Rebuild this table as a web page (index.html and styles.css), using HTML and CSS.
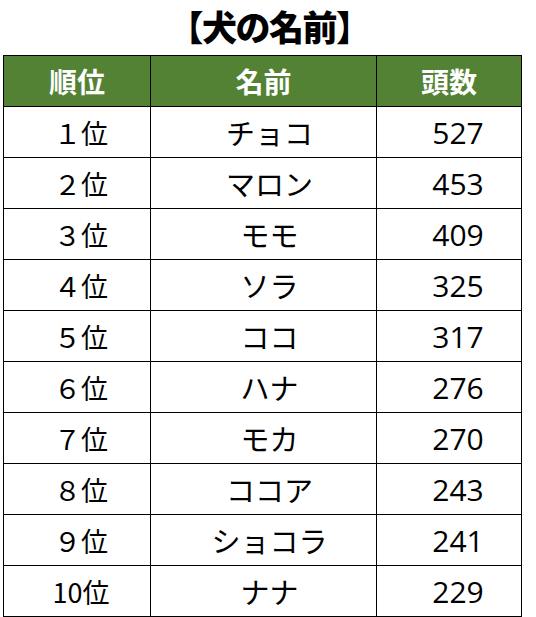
FILE: index.html
```html
<!DOCTYPE html>
<html lang="ja">
<head>
<meta charset="utf-8">
<link rel="stylesheet" href="styles.css">
</head>
<body>
<div class="page">
  <h1 class="title">【犬の名前】</h1>
  <table class="rank">
    <colgroup>
      <col class="c1"><col class="c2"><col class="c3">
    </colgroup>
    <thead>
      <tr><th>順位</th><th>名前</th><th>頭数</th></tr>
    </thead>
    <tbody>
      <tr><td>１位</td><td class="name">チョコ</td><td class="num">527</td></tr>
      <tr><td>２位</td><td class="name">マロン</td><td class="num">453</td></tr>
      <tr><td>３位</td><td class="name">モモ</td><td class="num">409</td></tr>
      <tr><td>４位</td><td class="name">ソラ</td><td class="num">325</td></tr>
      <tr><td>５位</td><td class="name">ココ</td><td class="num">317</td></tr>
      <tr><td>６位</td><td class="name">ハナ</td><td class="num">276</td></tr>
      <tr><td>７位</td><td class="name">モカ</td><td class="num">270</td></tr>
      <tr><td>８位</td><td class="name">ココア</td><td class="num">243</td></tr>
      <tr><td>９位</td><td class="name">ショコラ</td><td class="num">241</td></tr>
      <tr><td>10位</td><td class="name">ナナ</td><td class="num">229</td></tr>
    </tbody>
  </table>
</div>
</body>
</html>
```
FILE: styles.css
```css
html, body {
  margin: 0;
  padding: 0;
  background: #ffffff;
}
.page {
  width: 536px;
  padding: 0 0 0 3px;
  box-sizing: border-box;
  font-family: "Noto Sans CJK JP", "Noto Sans", sans-serif;
  color: #000;
}
.title {
  margin: 0;
  height: 55px;
  line-height: 51px;
  font-size: 35px;
  font-weight: 900;
  text-align: center;
  width: 532px;
  letter-spacing: -1.5px;
}
.rank {
  border-collapse: collapse;
  width: 518px;
  table-layout: fixed;
}
.c1 { width: 147px; }
.c2 { width: 226px; }
.c3 { width: 145px; }
.rank th, .rank td {
  border: 1.5px solid #000;
  height: 51px;
  padding: 0;
  text-align: center;
  vertical-align: middle;
  box-sizing: border-box;
}
.rank th {
  background: #548235;
  color: #fff;
  font-size: 28px;
  font-weight: 700;
}
.rank td {
  font-size: 27px;
  font-weight: 400;
  padding-left: 8px;
}
.rank td.name {
  font-size: 29px;
  padding-left: 12px;
}
.rank td.num {
  font-family: "Open Sans", "Noto Sans", sans-serif;
  font-size: 30px;
  padding-left: 18px;
}
```
